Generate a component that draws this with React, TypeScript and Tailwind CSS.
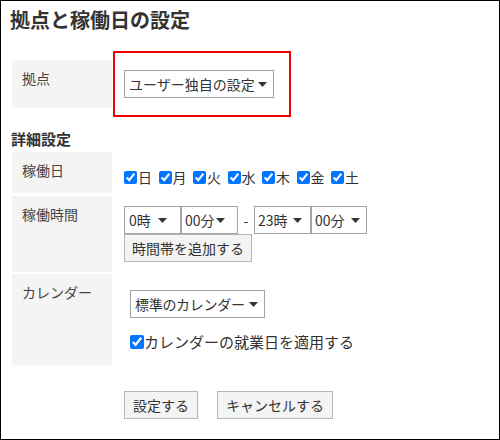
import React from 'react';

const font = { fontFamily: '"Noto Sans CJK JP", "Noto Sans", sans-serif' };

const Caret = () => (
  <svg width="9" height="5" viewBox="0 0 9 5" className="shrink-0">
    <polygon points="0,0 9,0 4.5,5" fill="#333" />
  </svg>
);

interface FakeSelectProps {
  label: string;
  className?: string;
}

// looks like a native select box
const FakeSelect: React.FC<FakeSelectProps> = ({ label, className = '' }) => (
  <div
    className={`flex items-center justify-between h-[28px] bg-white border border-[#a3a3a3] text-[14px] leading-[20px] text-[#333] whitespace-nowrap ${className}`}
  >
    <span>{label}</span>
    <Caret />
  </div>
);

const Label: React.FC<{ text: string }> = ({ text }) => (
  <div className="w-[100px] shrink-0 self-stretch bg-[#f4f4f4] pl-[10px] pt-[8px] text-[14px] leading-[20px] text-[#444]">
    {text}
  </div>
);

const Check: React.FC<{ text: string }> = ({ text }) => (
  <label className="flex items-center">
    <input type="checkbox" checked readOnly className="w-[13px] h-[13px] m-0" />
    <span className="ml-[1px] text-[14px] leading-[20px] text-[#333]">{text}</span>
  </label>
);

const days = ['日', '月', '火', '水', '木', '金', '土'];

export default function App() {
  return (
    <div style={font} className="w-[500px] h-[440px] border border-black bg-white overflow-hidden">
      <h1 className="pl-[9px] pt-[9px] text-[20px] leading-[20px] font-bold text-[#333]">拠点と稼働日の設定</h1>

      {/* 拠点 */}
      <div className="mt-[21px] pl-[11px] flex items-center">
        <div className="w-[100px] h-[48px] bg-[#f4f4f4] pl-[10px] pt-[8px] text-[14px] leading-[20px] text-[#444]">拠点</div>
        <div className="ml-[1px] w-[178px] h-[66px] border-2 border-[#f00000] pl-[9px] pt-[17px]">
          <FakeSelect label="ユーザー独自の設定" className="w-[150px] pl-[4px] pr-[6px]" />
        </div>
      </div>

      <div className="mt-[12px] pl-[10px] text-[15px] leading-[20px] font-bold text-[#333]">詳細設定</div>

      <div className="pl-[11px]">
        {/* 稼働日 */}
        <div className="mt-[3px] h-[41px] flex">
          <Label text="稼働日" />
          <div className="ml-[12px] pt-[15px] flex items-start gap-[6.5px]">
            {days.map((d) => (
              <Check key={d} text={d} />
            ))}
          </div>
        </div>

        {/* 稼働時間 */}
        <div className="mt-[3px] h-[76px] flex">
          <Label text="稼働時間" />
          <div className="ml-[12px] pt-[10px] flex flex-col items-start">
            <div className="flex items-center">
              <FakeSelect label="0時" className="w-[57px] pl-[4px] pr-[13px]" />
              <FakeSelect label="00分" className="w-[57px] pl-[3px] pr-[12px]" />
              <span className="w-[16px] text-center text-[14px] leading-[20px] text-[#333]">-</span>
              <FakeSelect label="23時" className="w-[57px] pl-[3px] pr-[8px]" />
              <FakeSelect label="00分" className="w-[56px] pl-[3px] pr-[6px]" />
            </div>
            <button className="h-[28px] px-[7px] bg-[#f4f4f4] border border-[#b5b5b5] text-[14px] leading-[20px] text-[#333]">
              時間帯を追加する
            </button>
          </div>
        </div>

        {/* カレンダー */}
        <div className="mt-[2px] h-[91px] flex">
          <Label text="カレンダー" />
          <div className="ml-[18px] pt-[16px] flex flex-col items-start">
            <FakeSelect label="標準のカレンダー" className="w-[135px] pl-[4px] pr-[6px] tracking-[-0.3px]" />
            <div className="mt-[14px]">
              <label className="flex items-center">
                <input type="checkbox" checked readOnly className="w-[14px] h-[14px] m-0" />
                <span className="text-[15px] leading-[20px] text-[#333]">カレンダーの就業日を適用する</span>
              </label>
            </div>
          </div>
        </div>
      </div>

      <div className="mt-[26px] ml-[123px] flex gap-[19px]">
        <button className="h-[28px] px-[8px] bg-[#f4f4f4] border border-[#b5b5b5] text-[14px] leading-[20px] text-[#333]">
          設定する
        </button>
        <button className="h-[28px] px-[8px] bg-[#f4f4f4] border border-[#b5b5b5] text-[14px] leading-[20px] text-[#333]">
          キャンセルする
        </button>
      </div>
    </div>
  );
}
